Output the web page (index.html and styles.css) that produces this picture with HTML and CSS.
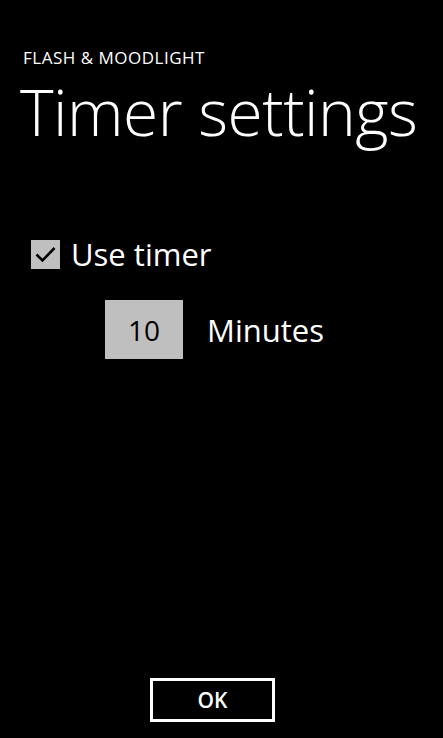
FILE: index.html
```html
<!DOCTYPE html>
<html lang="en">
<head>
    <meta charset="UTF-8">
    <meta name="viewport" content="width=device-width, initial-scale=1.0">
    <title>Timer settings</title>
    <link rel="stylesheet" href="styles.css">
</head>
<body>
    <div class="page">
        <div class="app-title">FLASH &amp; MOODLIGHT</div>
        <h1 class="page-title">Timer settings</h1>

        <label class="check-row">
            <span class="check-box">
                <svg width="21" height="17" viewBox="0 0 21 17">
                    <path d="M1.5 8.5 L7.5 14.5 L19.5 2" fill="none" stroke="#000" stroke-width="2.6"/>
                </svg>
            </span>
            <span class="check-label">Use timer</span>
        </label>

        <div class="minutes-row">
            <div class="minutes-box">10</div>
            <span class="minutes-label">Minutes</span>
        </div>

        <div class="spacer"></div>

        <div class="footer">
            <button class="ok-button">OK</button>
        </div>
    </div>
</body>
</html>
```
FILE: styles.css
```css
body {
    margin: 0;
    background-color: #000;
    color: #fff;
    font-family: "Open Sans", "Noto Sans", sans-serif;
}
.page {
    height: 738px;
    display: flex;
    flex-direction: column;
    box-sizing: border-box;
    padding: 48px 0 16px 0;
}
.app-title {
    font-size: 17px;
    margin-left: 23px;
    line-height: 20px;
    letter-spacing: 0.5px;
}
.page-title {
    font-size: 64px;
    font-weight: 300;
    margin: 8px 0 0 20px;
    line-height: 72px;
    letter-spacing: -0.5px;
}
.check-row {
    display: flex;
    align-items: center;
    margin: 92px 0 0 31px;
}
.check-box {
    width: 29px;
    height: 29px;
    background-color: #bfbfbf;
    display: flex;
    align-items: center;
    justify-content: center;
}
.check-label {
    font-size: 31px;
    margin-left: 11px;
    line-height: 29px;
}
.minutes-row {
    display: flex;
    align-items: center;
    margin: 31px 0 0 105px;
}
.minutes-box {
    width: 78px;
    height: 59px;
    background-color: #bfbfbf;
    color: #000;
    font-size: 28px;
    display: flex;
    align-items: center;
    justify-content: center;
}
.minutes-label {
    font-size: 31px;
    margin-left: 24px;
}
.spacer {
    flex: 1;
}
.footer {
    display: flex;
    padding-left: 150px;
}
.ok-button {
    width: 125px;
    height: 44px;
    background: #000;
    color: #fff;
    border: 3px solid #fff;
    font-family: "Open Sans", "Noto Sans", sans-serif;
    font-size: 21px;
    font-weight: 600;
}
```
